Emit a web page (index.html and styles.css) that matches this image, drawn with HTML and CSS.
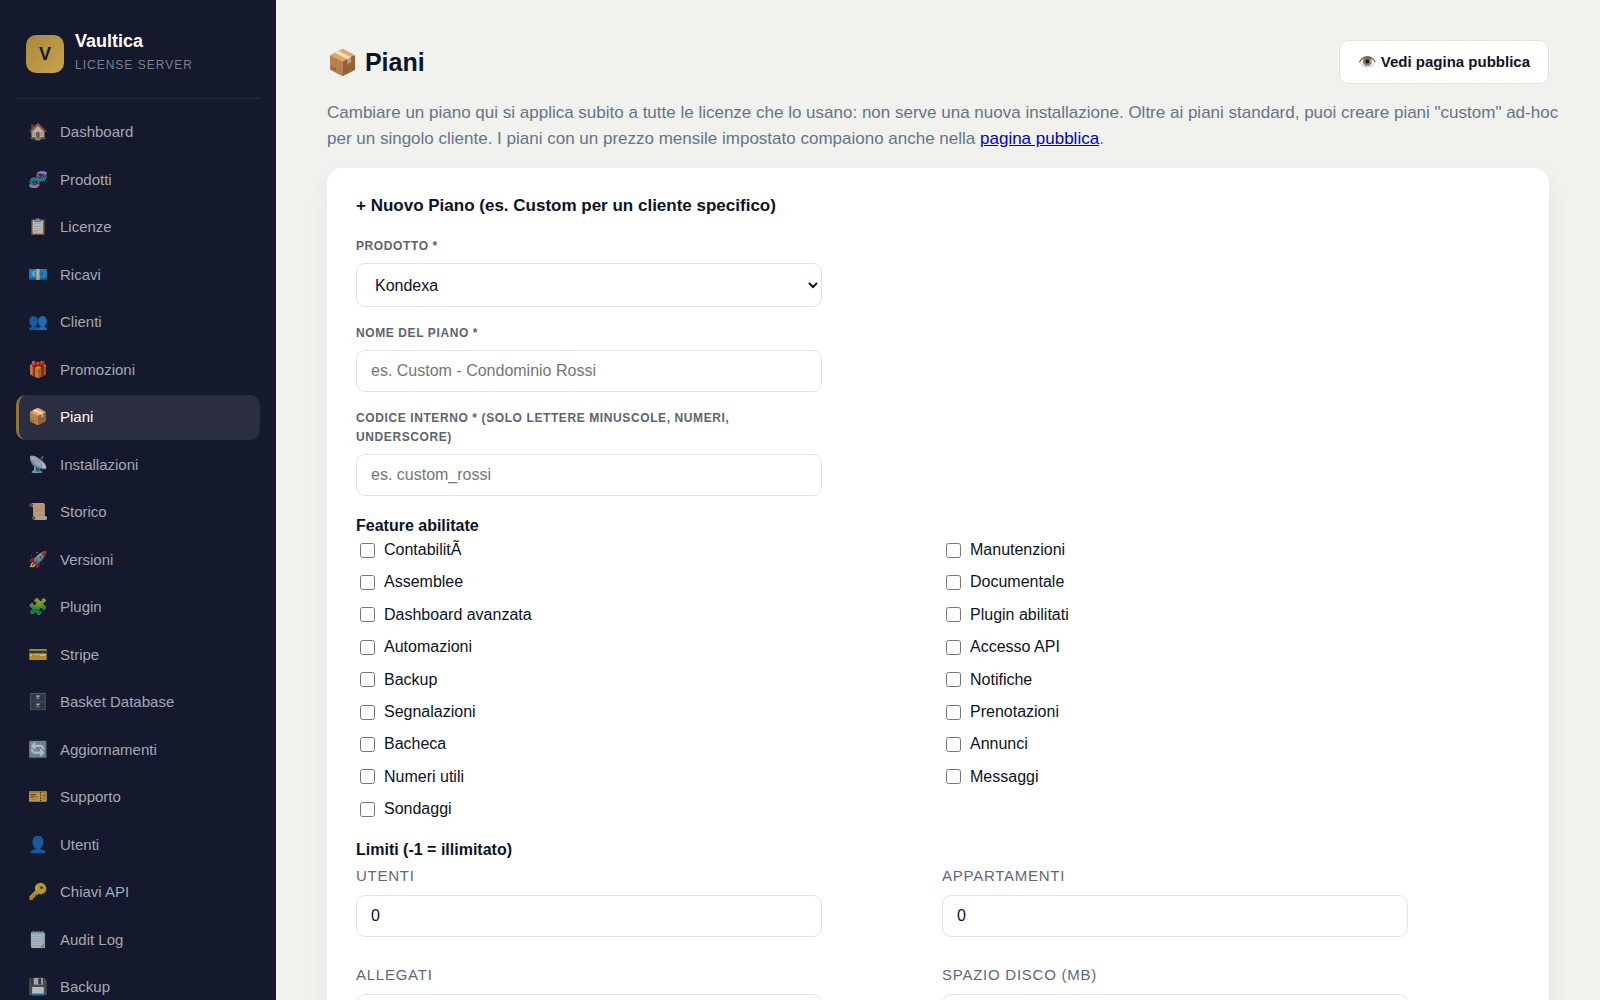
FILE: index.html
```html
<!DOCTYPE html>
<html lang="it">
<head>
<meta charset="utf-8">
<meta name="viewport" content="width=device-width, initial-scale=1">
<title>Piani - Vaultica</title>
<link rel="stylesheet" href="styles.css">
</head>
<body>
<div class="shell">
  <aside class="sidebar">
    <div class="brand">
      <div class="brand-logo">V</div>
      <div>
        <div class="brand-name">Vaultica</div>
        <div class="brand-sub">License Server</div>
      </div>
    </div>
    <nav class="nav">
      <a href="#"><span class="icon">🏠</span>Dashboard</a>
      <a href="#"><span class="icon">🧬</span>Prodotti</a>
      <a href="#"><span class="icon">📋</span>Licenze</a>
      <a href="#"><span class="icon">💶</span>Ricavi</a>
      <a href="#"><span class="icon">👥</span>Clienti</a>
      <a href="#"><span class="icon">🎁</span>Promozioni</a>
      <a href="#" class="active" aria-current="page"><span class="icon">📦</span>Piani</a>
      <a href="#"><span class="icon">📡</span>Installazioni</a>
      <a href="#"><span class="icon">📜</span>Storico</a>
      <a href="#"><span class="icon">🚀</span>Versioni</a>
      <a href="#"><span class="icon">🧩</span>Plugin</a>
      <a href="#"><span class="icon">💳</span>Stripe</a>
      <a href="#"><span class="icon">🗄️</span>Basket Database</a>
      <a href="#"><span class="icon">🔄</span>Aggiornamenti</a>
      <a href="#"><span class="icon">🎫</span>Supporto</a>
      <a href="#"><span class="icon">👤</span>Utenti</a>
      <a href="#"><span class="icon">🔑</span>Chiavi API</a>
      <a href="#"><span class="icon">🗒️</span>Audit Log</a>
      <a href="#"><span class="icon">💾</span>Backup</a>
    </nav>
  </aside>

  <main class="main">
    <header class="topbar">
      <h1>📦 Piani</h1>
      <a href="#" class="btn">👁️ Vedi pagina pubblica</a>
    </header>
    <p class="intro">Cambiare un piano qui si applica subito a tutte le licenze che lo usano: non serve una nuova installazione. Oltre ai piani standard, puoi creare piani "custom" ad-hoc per un singolo cliente. I piani con un prezzo mensile impostato compaiono anche nella <a href="#">pagina pubblica</a>.</p>

    <form class="card">
      <h2>+ Nuovo Piano (es. Custom per un cliente specifico)</h2>
      <div class="field">
        <label for="prodotto">Prodotto *</label>
        <select id="prodotto"><option>Kondexa</option></select>
      </div>
      <div class="field">
        <label for="nome">Nome del piano *</label>
        <input type="text" id="nome" placeholder="es. Custom - Condominio Rossi">
      </div>
      <div class="field">
        <label for="codice">Codice interno * (solo lettere minuscole, numeri, underscore)</label>
        <input type="text" id="codice" placeholder="es. custom_rossi">
      </div>

      <h3>Feature abilitate</h3>
      <div class="features">
        <label><input type="checkbox">ContabilitÃ</label>
        <label><input type="checkbox">Manutenzioni</label>
        <label><input type="checkbox">Assemblee</label>
        <label><input type="checkbox">Documentale</label>
        <label><input type="checkbox">Dashboard avanzata</label>
        <label><input type="checkbox">Plugin abilitati</label>
        <label><input type="checkbox">Automazioni</label>
        <label><input type="checkbox">Accesso API</label>
        <label><input type="checkbox">Backup</label>
        <label><input type="checkbox">Notifiche</label>
        <label><input type="checkbox">Segnalazioni</label>
        <label><input type="checkbox">Prenotazioni</label>
        <label><input type="checkbox">Bacheca</label>
        <label><input type="checkbox">Annunci</label>
        <label><input type="checkbox">Numeri utili</label>
        <label><input type="checkbox">Messaggi</label>
        <label><input type="checkbox">Sondaggi</label>
      </div>

      <h3>Limiti (-1 = illimitato)</h3>
      <div class="limits">
        <div class="limit">
          <label for="utenti">Utenti</label>
          <input type="text" inputmode="numeric" id="utenti" value="0">
        </div>
        <div class="limit">
          <label for="appartamenti">Appartamenti</label>
          <input type="text" inputmode="numeric" id="appartamenti" value="0">
        </div>
        <div class="limit">
          <label for="allegati">Allegati</label>
          <input type="text" inputmode="numeric" id="allegati" value="0">
        </div>
        <div class="limit">
          <label for="spazio">Spazio disco (MB)</label>
          <input type="text" inputmode="numeric" id="spazio" value="0">
        </div>
      </div>
    </form>
  </main>
</div>
</body>
</html>
```
FILE: styles.css
```css
* {
  box-sizing: border-box;
}

body {
  margin: 0;
  background: #f1f2ed;
  color: #0b1329;
  font: 16px/26px "Liberation Sans", Arial, sans-serif;
}

.shell {
  display: flex;
  height: 100vh;
}

/* Sidebar */
.sidebar {
  flex: 0 0 276px;
  padding: 27px 16px;
  overflow: hidden;
  background: #14192e;
}

.brand {
  display: flex;
  align-items: center;
  gap: 11px;
  padding: 0 10px 23px;
  border-bottom: 1px solid #262b3e;
}

.brand-logo {
  display: grid;
  place-items: center;
  width: 38px;
  height: 38px;
  margin-top: 5px;
  border-radius: 10px;
  background: linear-gradient(135deg, #a88a3c, #c9a24c);
  color: #14192e;
  font-size: 18px;
  font-weight: 700;
}

.brand-name {
  color: #fff;
  font-size: 18px;
  font-weight: 700;
  line-height: 28px;
}

.brand-sub {
  color: #7b7f8d;
  font-size: 12px;
  letter-spacing: 1px;
  line-height: 20px;
  text-transform: uppercase;
}

.nav {
  display: flex;
  flex-direction: column;
  gap: 3px;
  margin-top: 11px;
}

.nav a {
  display: flex;
  align-items: center;
  gap: 12px;
  padding: 11px 9px;
  border-left: 3px solid transparent;
  border-radius: 10px;
  color: #a6a8b1;
  font-size: 15px;
  line-height: 1.5;
  text-decoration: none;
}

.nav .icon {
  width: 20px;
  font-size: 16px;
  line-height: 20px;
  text-align: center;
  opacity: .7;
}

.nav .active {
  border-left-color: #8f742f;
  background: #2b2d41;
  color: #fff;
}

.nav .active .icon {
  opacity: 1;
}

/* Page */
.main {
  flex: 1;
  min-width: 0;
  padding: 40px 51px;
  overflow-y: auto;
  scrollbar-width: none;
}

.topbar {
  display: flex;
  align-items: center;
  justify-content: space-between;
}

h1 {
  margin: 0;
  font-size: 25px;
  line-height: 36px;
}

.btn {
  padding: 9px 18px;
  border: 1px solid #e0e1dd;
  border-radius: 9px;
  background: #fff;
  color: #0b1329;
  font-size: 15px;
  font-weight: 700;
  line-height: 24px;
  text-decoration: none;
}

.intro {
  margin: 16px -20px 16px 0;
  color: #64748b;
  font-size: 17px;
}

.intro a {
  color: #0000cd;
}

.card {
  padding: 24px 29px;
  border-radius: 15px;
  background: #fff;
  box-shadow: 0 8px 24px rgba(15, 23, 42, .05);
}

h2 {
  margin: 0 0 17px;
  font-size: 17px;
  line-height: 28px;
}

h3 {
  margin: 0;
  font-size: 16px;
  line-height: 26px;
}

.field,
.limit {
  display: flex;
  flex-direction: column;
  max-width: 466px;
}

.field {
  margin-bottom: 17px;
}

.field label {
  margin-bottom: 7px;
  color: #5b6472;
  font-size: 12px;
  font-weight: 700;
  letter-spacing: .05em;
  line-height: 19px;
  text-transform: uppercase;
}

select,
input[type="text"] {
  width: 100%;
  height: 42px;
  padding: 0 14px;
  border: 1px solid #e2e3e0;
  border-radius: 9px;
  background: #fff;
  color: #0b1329;
  font: 16px "Liberation Sans", Arial, sans-serif;
}

select {
  height: 44px;
}

.features,
.limits {
  display: grid;
  grid-template-columns: 1fr 1fr;
  column-gap: 8px;
}

.features {
  row-gap: 10px;
  margin-bottom: 16px;
}

.features label {
  display: flex;
  align-items: center;
  gap: 6px;
  font-size: 16px;
  line-height: 1.4;
}

.features input {
  width: 15px;
  height: 15px;
}

.limits {
  row-gap: 25px;
}

.limit label {
  margin-bottom: 6px;
  color: #5f6878;
  font-size: 15px;
  letter-spacing: .05em;
  text-transform: uppercase;
}
```
